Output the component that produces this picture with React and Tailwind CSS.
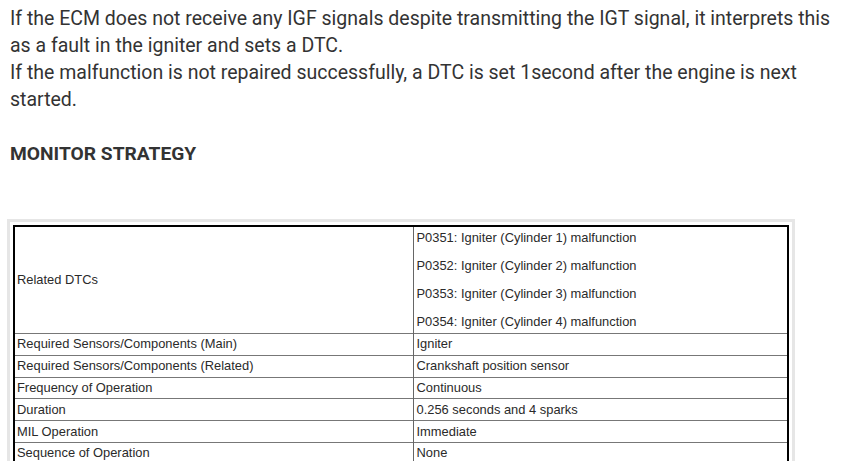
export default function App() {
  const rows = [
    ["Required Sensors/Components (Main)", "Igniter"],
    ["Required Sensors/Components (Related)", "Crankshaft position sensor"],
    ["Frequency of Operation", "Continuous"],
    ["Duration", "0.256 seconds and 4 sparks"],
    ["MIL Operation", "Immediate"],
    ["Sequence of Operation", "None"],
  ];
  const dtcs = [
    "P0351: Igniter (Cylinder 1) malfunction",
    "P0352: Igniter (Cylinder 2) malfunction",
    "P0353: Igniter (Cylinder 3) malfunction",
    "P0354: Igniter (Cylinder 4) malfunction",
  ];
  return (
    <div className="w-[844px] h-[461px] overflow-hidden bg-white">
      <div className="pl-[10px] pr-[6px] pt-[5px] font-['Roboto',sans-serif] text-[19.5px] leading-[27px] text-[#333333]">
        <p>
          If the ECM does not receive any IGF signals despite transmitting the IGT signal, it interprets this as a fault in the igniter and sets a DTC.
        </p>
        <p>
          If the malfunction is not repaired successfully, a DTC is set 1second after the engine is next started.
        </p>
      </div>
      <h3 className="mt-[29px] pl-[10px] font-['Roboto',sans-serif] font-bold text-[19.2px] leading-[24px] text-[#333333]">
        MONITOR STRATEGY
      </h3>
      <div className="mt-[53px] ml-[7px] w-[788px] border-[3px] border-[#e6e6e6] p-[3px]">
        <table className="w-full border-collapse border-2 border-black font-['Liberation_Sans',Arial,sans-serif] text-[12.9px] text-[#2a2a2a]">
          <tbody>
            <tr className="border-b border-[#777777]">
              <td className="w-[399px] border-r border-[#666666] pl-[2px] align-middle">Related DTCs</td>
              <td className="pl-[3px] align-top">
                <div className="flex flex-col gap-[6px]">
                  {dtcs.map((d) => (
                    <div key={d} className="leading-[22px]">{d}</div>
                  ))}
                </div>
              </td>
            </tr>
            {rows.map(([a, b]) => (
              <tr key={a} className="h-[21.8px] border-b border-[#777777]">
                <td className="border-r border-[#666666] pl-[2px] leading-[14px] align-middle">{a}</td>
                <td className="pl-[3px] leading-[14px] align-middle">{b}</td>
              </tr>
            ))}
          </tbody>
        </table>
      </div>
    </div>
  );
}
